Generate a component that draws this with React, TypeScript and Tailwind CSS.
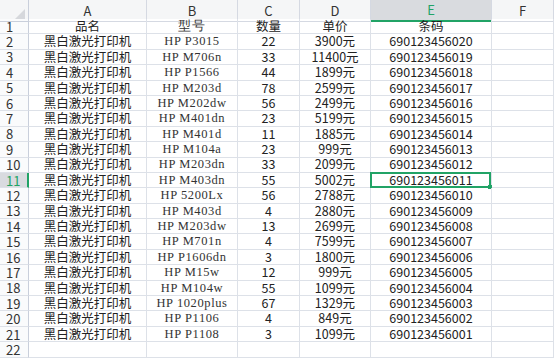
const cols = ["A", "B", "C", "D", "E", "F"];

const models = [
  ["HP P3015", "22", "3900元"],
  ["HP M706n", "33", "11400元"],
  ["HP P1566", "44", "1899元"],
  ["HP M203d", "78", "2599元"],
  ["HP M202dw", "56", "2499元"],
  ["HP M401dn", "23", "5199元"],
  ["HP M401d", "11", "1885元"],
  ["HP M104a", "23", "999元"],
  ["HP M203dn", "33", "2099元"],
  ["HP M403dn", "55", "5002元"],
  ["HP 5200Lx", "56", "2788元"],
  ["HP M403d", "4", "2880元"],
  ["HP M203dw", "13", "2699元"],
  ["HP M701n", "4", "7599元"],
  ["HP P1606dn", "3", "1800元"],
  ["HP M15w", "12", "999元"],
  ["HP M104w", "55", "1099元"],
  ["HP 1020plus", "67", "1329元"],
  ["HP P1106", "4", "849元"],
  ["HP P1108", "3", "1099元"],
];

// 第1行是表头，其余为数据行
const rows: string[][] = [
  ["品名", "型号", "数量", "单价", "条码", ""],
  ...models.map(([model, qty, price], i) => [
    "黑白激光打印机",
    model,
    qty,
    price,
    `6901234560${String(20 - i).padStart(2, "0")}`,
    "",
  ]),
  ["", "", "", "", "", ""],
];

const gridCols = "grid grid-cols-[29px_118px_91px_62px_71px_121px_62px]";

const App = () => {
  return (
    <div className="h-[361px] w-[554px] overflow-hidden bg-white font-['Noto_Sans_CJK_SC',sans-serif] text-[12.5px] text-[#222]">
      {/* 列标题 */}
      <div className={`${gridCols} h-[19px] bg-[#f5f6f7]`}>
        <div className="relative border-r border-b border-[#c9cfdb]">
          <svg className="absolute right-[3px] bottom-[2px]" width="10" height="10" viewBox="0 0 10 10">
            <polygon points="10,0 10,10 0,10" fill="#d6d8dc" />
          </svg>
        </div>
        {cols.map((c) =>
          c === "E" ? (
            <div
              key={c}
              className="flex items-center justify-center border-r border-b-2 border-r-[#d5d9e2] border-b-[#21a366] bg-[#d9dbdf] text-[13px] text-[#21a366]"
            >
              {c}
            </div>
          ) : (
            <div
              key={c}
              className="flex items-center justify-center border-r border-b border-[#d5d9e2] text-[13px] text-[#333]"
            >
              {c}
            </div>
          )
        )}
      </div>

      {rows.map((r, ri) => {
        const n = ri + 1;
        const active = n === 11;
        return (
          <div key={n} className={`${gridCols} h-[15.4px]`}>
            <div
              className={
                active
                  ? "flex items-center border-r-2 border-b border-r-[#21a366] border-b-[#dde1e8] bg-[#d9dbdf] pl-[6px] text-[13px] leading-none text-[#21a366]"
                  : "flex items-center border-r border-b border-r-[#c9cfdb] border-b-[#dde1e8] bg-[#fafbfc] pl-[6px] text-[13px] leading-none text-[#333]"
              }
            >
              {n <= 22 ? n : ""}
            </div>
            {r.map((v, ci) => (
              <div
                key={ci}
                className={
                  ci === 1
                    ? "flex items-center justify-center border-r border-b border-[#dde1e8] font-['Liberation_Serif',serif] text-[12.5px] leading-none tracking-[0.6px] whitespace-pre text-[#333]"
                    : "relative flex items-center justify-center border-r border-b border-[#dde1e8] leading-none whitespace-nowrap"
                }
              >
                {v}
                {active && ci === 4 && (
                  <div className="absolute -top-[1px] -left-[1px] h-[calc(100%+2px)] w-[calc(100%+1px)] border-2 border-[#21a366]">
                    <div className="absolute -right-[3px] -bottom-[3px] h-[4px] w-[4px] bg-[#21a366]" />
                  </div>
                )}
              </div>
            ))}
          </div>
        );
      })}
    </div>
  );
};

export default App;
